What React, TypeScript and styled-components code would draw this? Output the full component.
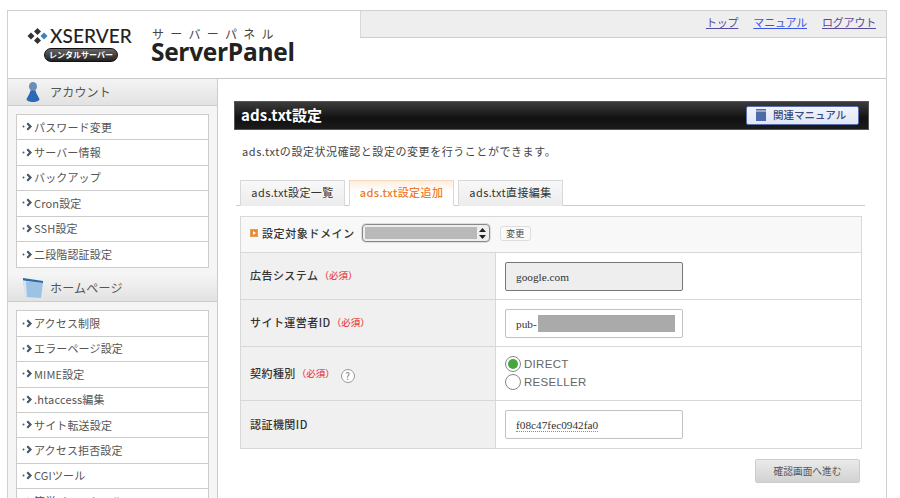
import React from "react";
import styled, { createGlobalStyle } from "styled-components";

const Global = createGlobalStyle`
  html, body { margin: 0; padding: 0; background: #fff; height: 498px; overflow: hidden; }
  body { font-family: "Noto Sans CJK JP", "Noto Sans", "Liberation Sans", sans-serif; color: #333; }
`;
const Page = styled.div`
  width: 880px; height: 488px; margin: 10px 0 0 7px; box-sizing: border-box;
  border: 1px solid #d0d0d0; border-bottom: 0; overflow: hidden; display: flex; flex-direction: column;
`;
const Header = styled.header`
  height: 68px; box-sizing: border-box; flex: none; display: flex; border-bottom: 1px solid #c8c8c8;
`;
const Brand = styled.div`
  width: 352px; flex: none; display: flex; padding: 14px 0 0 19px; box-sizing: border-box; gap: 18px;
`;
const Logo = styled.div`
  width: 106px; display: flex; flex-direction: column; align-items: flex-start;
`;
const LogoTop = styled.div`display: flex; align-items: center; gap: 2px; height: 22px;`;
const LogoWord = styled.span`
  font: 500 19px/22px "Lato", "Noto Sans", sans-serif; color: #222; letter-spacing: .1px;
`;
const LogoPill = styled.span`
  margin: 1px 0 0 17px; width: 74px; height: 14px; border-radius: 7px; border: 1px solid #111; box-sizing: border-box;
  background: linear-gradient(#666, #222); color: #fff; font-size: 8px; line-height: 12px; text-align: center; font-weight: 700;
`;
const Product = styled.div`display: flex; flex-direction: column; margin-top: 3px;`;
const ProductKana = styled.span`font-size: 12px; line-height: 12px; letter-spacing: 6.3px; color: #444; padding-left: 1px;`;
const ProductName = styled.span`font: 700 24.5px/24px "Open Sans", "Noto Sans", sans-serif; color: #222; letter-spacing: -.3px;`;
const TopBar = styled.nav`
  flex: 1; height: 27px; background: #eee; border-left: 1px solid #d8d8d8; border-bottom: 1px solid #ccc;
  display: flex; justify-content: flex-end; align-items: center; gap: 15px; padding: 0 10px 4px 0; box-sizing: border-box;
`;
const TopLink = styled.a<{ $visited?: boolean }>`
  font-size: 11px; line-height: 14px; text-decoration: underline; letter-spacing: -.2px;
  color: ${p => (p.$visited ? "#5a4a9a" : "#3a55e0")};
`;
const Body = styled.div`flex: 1; display: flex; min-height: 0;`;
const Sidebar = styled.aside`
  width: 209px; flex: none; background: #f5f5f5; border-right: 1px solid #ccc; overflow: hidden;
`;
const SideHead = styled.div`
  height: 27px; box-sizing: border-box; display: flex; align-items: center; gap: 5px; padding: 0 0 1px 13px;
  background: linear-gradient(#f4f4f4, #e2e2e2); border-bottom: 1px solid #ccc;
  font-size: 12px; color: #555; letter-spacing: .2px;
`;
const IconSlot = styled.span`width: 24px; flex: none; display: flex; justify-content: center;`;
const SideMenu = styled.ul`
  list-style: none; margin: 8px 8px 7px 8px; padding: 0; background: #fff; border: 1px solid #ccc;
`;
const SideItem = styled.li`
  height: 25.4px; box-sizing: border-box; border-bottom: 1px solid #ccc; display: flex; align-items: center; padding: 0 0 1px 5px;
  font-size: 11px; color: #555; letter-spacing: .15px;
  &:last-child { border-bottom: 0; }
`;
const Main = styled.main`flex: 1; padding: 22px 17px 0 16px; min-width: 0;`;
const TitleBar = styled.div`
  height: 29px; box-sizing: border-box; background: linear-gradient(#3c3c3c, #111 60%, #1b1b1b); border: 1px solid #555;
  display: flex; align-items: center; justify-content: space-between; padding: 0 9px 1px 6px;
`;
const Title = styled.h1`margin: 0; font-size: 15px; line-height: 20px; font-weight: 700; color: #fff; letter-spacing: .1px;`;
const ManualButton = styled.a`
  width: 113px; height: 19px; box-sizing: border-box; background: linear-gradient(#f2f4fb, #e1e6f5); border: 1px solid #5a6fb0; border-radius: 2px;
  display: flex; align-items: center; gap: 7px; padding: 0 0 1px 9px; font-size: 10.5px; font-weight: 500; color: #3a4a7c;
`;
const Intro = styled.p`margin: 13px 0 0 8px; font-size: 11px; line-height: 16px; color: #444; letter-spacing: .56px;`;
const Tabs = styled.div`
  display: flex; gap: 4px; margin: 21px 4px 0 2px; padding-left: 4px; border-bottom: 1px solid #ccc; height: 26px; box-sizing: border-box;
`;
const Tab = styled.div<{ $active?: boolean }>`
  width: 105px; height: 26px; box-sizing: border-box; display: flex; align-items: center; justify-content: center; padding-bottom: 3px;
  font-size: 11px; letter-spacing: .4px; border: 1px solid #d8d8d8; border-bottom: 0;
  color: ${p => (p.$active ? "#f07a2a" : "#333")}; font-weight: ${p => (p.$active ? 500 : 400)};
  background: ${p => (p.$active ? "linear-gradient(#fdeedd, #fff 45%)" : "linear-gradient(#f8f8f8, #ececec)")};
  ${p => p.$active && "border-bottom: 1px solid #fff; border-top-color: #f3d9bf;"}
`;
const Form = styled.div`
  margin: 10px 0 0 6px; border: 1px solid #d8d8d8; width: 622px; box-sizing: border-box;
`;
const DomainRow = styled.div`
  height: 36px; box-sizing: border-box; background: #f8f8f8; border-bottom: 1px solid #d8d8d8; display: flex; align-items: center; padding: 0 0 3px 9px;
`;
const Marker = styled.span`
  width: 8px; height: 8px; background: #f0862e; border: 1px solid #e0a060; box-sizing: border-box; margin-right: 4px; flex: none;
  display: flex; align-items: center; justify-content: center;
  &::after { content: ""; border-left: 3px solid #fff; border-top: 2px solid transparent; border-bottom: 2px solid transparent; }
`;
const DomainLabel = styled.span`font-size: 11px; color: #333; letter-spacing: .6px; font-weight: 500;`;
const DomainSelect = styled.div`
  width: 128px; height: 18px; margin-left: 7px; box-sizing: border-box; border: 1px solid #888; border-radius: 4px; background: #eee;
  display: flex; align-items: center; justify-content: space-between; padding: 2px 3px 2px 2px; box-shadow: 0 0 0 1px #ddd;
`;
const Redaction = styled.span`flex: 1; align-self: stretch; background: #b9b9b9;`;
const Arrows = styled.svg`width: 7px; height: 11px; flex: none; margin-left: 2px;`;
const SmallButton = styled.button`
  width: 31px; height: 15px; padding: 0; margin-left: 10px; background: #fafafa; border: 1px solid #ddd; border-radius: 3px;
  font: 9px/13px "Noto Sans CJK JP", sans-serif; color: #444; letter-spacing: .4px;
`;
const Row = styled.div<{ $h: number; $last?: boolean }>`
  display: flex; height: ${p => p.$h}px; box-sizing: border-box;
  ${p => !p.$last && "border-bottom: 1px solid #d8d8d8;"}
`;
const LabelCell = styled.div`
  width: 255px; flex: none; box-sizing: border-box; background: #f0f0f0; border-right: 1px solid #d8d8d8;
  display: flex; align-items: center; padding: 0 0 2px 9px; font-size: 11px; font-weight: 500; color: #333; letter-spacing: .45px;
`;
const Required = styled.span`color: #e8474a; font-size: 9.5px; margin-left: 1px; font-weight: 500; letter-spacing: 0;`;
const Help = styled.span`
  width: 14px; height: 14px; margin-left: 6px; margin-top: 6px; border: 1px solid #999; border-radius: 50%; box-sizing: border-box;
  font-size: 10px; line-height: 12px; text-align: center; color: #777; font-weight: 400; background: #fff;
`;
const ValueCell = styled.div`
  flex: 1; display: flex; align-items: center; padding-left: 9px; background: #fff;
`;
const Field = styled.div<{ $disabled?: boolean }>`
  width: 178px; height: 29px; box-sizing: border-box; border-radius: 2px; padding: 1px 0 0 10px;
  display: flex; align-items: center; font: 11.3px/14px "Liberation Serif", serif; color: #333;
  border: 1px solid ${p => (p.$disabled ? "#777" : "#c2c2c2")};
  background: ${p => (p.$disabled ? "#eee" : "#fff")};
`;
const FieldRedaction = styled.span`width: 137px; height: 17px; background: #aaa; margin-left: 1px;`;
const Squiggle = styled.span`border-bottom: 1px dotted #e66; line-height: 12px;`;
const Radios = styled.div`display: flex; flex-direction: column; margin-top: -1px;`;
const RadioRow = styled.label`
  display: flex; align-items: center; gap: 3px; height: 17.5px; font-size: 11.5px; color: #666; letter-spacing: .3px;
  font-family: "Liberation Sans", sans-serif;
`;
const RadioDot = styled.span<{ $on?: boolean }>`
  width: 16px; height: 16px; box-sizing: border-box; border-radius: 50%; border: 1px solid #888; background: #fff; flex: none;
  display: flex; align-items: center; justify-content: center;
  &::after { content: ""; width: 10px; height: 10px; border-radius: 50%; background: ${p => (p.$on ? "#44a63c" : "transparent")}; }
`;
const Actions = styled.div`display: flex; justify-content: flex-end; margin: 10px 9px 0 0;`;
const Submit = styled.button`
  width: 105px; height: 24px; padding: 0; border: 1px solid #ccc; border-radius: 2px; background: linear-gradient(#eaeaea, #d2d2d2);
  font: 9.7px/14px "Noto Sans CJK JP", sans-serif; color: #555;
`;
const IconSvg = styled.svg`flex: none; display: block;`;
const Bullet = styled.svg`width: 11px; height: 9px; flex: none; margin-right: 1px;`;

const Diamonds = () => (
  <IconSvg width="21" height="16" viewBox="0 0 21 16">
    <path d="M10.500 0l3.500 3.500-3.500 3.500L7 3.500z" fill="#333" />
    <path d="M4 4.500l3.500 3.500L4 11.500.5 8z" fill="#333" />
    <path d="M17 4.500l3.500 3.500-3.500 3.500L13.500 8z" fill="#3f7fc0" />
    <path d="M10.500 9l3.500 3.500-3.500 3.500L7 12.500z" fill="#333" />
  </IconSvg>
);
const PersonIcon = () => (
  <IconSvg width="14" height="21" viewBox="0 0 14 21">
    <ellipse cx="7" cy="5.500" rx="4" ry="4.500" fill="#6d8db5" />
    <path d="M4.500 9.500h5l1 3 3 5.500c0 2-3 3-6.500 3S.5 20 .5 18l3-5.500z" fill="#2a68b8" />
  </IconSvg>
);
const WindowIcon = () => (
  <IconSvg width="22" height="20" viewBox="0 0 22 20">
    <path d="M1 3l20 2-2 15-15-1z" fill="#9cc2e4" />
    <path d="M1 0l20 3v2L1 2.500z" fill="#2a6aa8" />
    <path d="M1 2.500l3 .5 1 16-2-1z" fill="#d4e4f2" />
  </IconSvg>
);
const BookIcon = () => (
  <IconSvg width="10" height="12" viewBox="0 0 10 12">
    <rect width="10" height="12" fill="#4f6aa8" />
    <rect y="1.500" width="10" height="1" fill="#dfe5f4" />
  </IconSvg>
);
const ItemBullet = () => (
  <Bullet viewBox="0 0 11 9">
    <circle cx="1.500" cy="4.500" r="1" fill="#555" />
    <path d="M6 .5l4 4-4 4-1.500-1.500 2.500-2.500-2.500-2.500z" fill="#456" />
  </Bullet>
);

const account = ["パスワード変更", "サーバー情報", "バックアップ", "Cron設定", "SSH設定", "二段階認証設定"];
const homepage = ["アクセス制限", "エラーページ設定", "MIME設定", ".htaccess編集", "サイト転送設定", "アクセス拒否設定", "CGIツール", "簡単インストール"];

export default function App() {
  return (
    <>
      <Global />
      <Page>
        <Header>
          <Brand>
            <Logo>
              <LogoTop><Diamonds /><LogoWord>XSERVER</LogoWord></LogoTop>
              <LogoPill>レンタルサーバー</LogoPill>
            </Logo>
            <Product>
              <ProductKana>サーバーパネル</ProductKana>
              <ProductName>ServerPanel</ProductName>
            </Product>
          </Brand>
          <TopBar>
            <TopLink $visited>トップ</TopLink>
            <TopLink>マニュアル</TopLink>
            <TopLink $visited>ログアウト</TopLink>
          </TopBar>
        </Header>
        <Body>
          <Sidebar>
            <SideHead><IconSlot><PersonIcon /></IconSlot>アカウント</SideHead>
            <SideMenu>
              {account.map(t => <SideItem key={t}><ItemBullet />{t}</SideItem>)}
            </SideMenu>
            <SideHead><IconSlot><WindowIcon /></IconSlot>ホームページ</SideHead>
            <SideMenu>
              {homepage.map(t => <SideItem key={t}><ItemBullet />{t}</SideItem>)}
            </SideMenu>
          </Sidebar>
          <Main>
            <TitleBar>
              <Title>ads.txt設定</Title>
              <ManualButton><BookIcon />関連マニュアル</ManualButton>
            </TitleBar>
            <Intro>ads.txtの設定状況確認と設定の変更を行うことができます。</Intro>
            <Tabs>
              <Tab>ads.txt設定一覧</Tab>
              <Tab $active>ads.txt設定追加</Tab>
              <Tab>ads.txt直接編集</Tab>
            </Tabs>
            <Form>
              <DomainRow>
                <Marker />
                <DomainLabel>設定対象ドメイン</DomainLabel>
                <DomainSelect>
                  <Redaction />
                  <Arrows viewBox="0 0 7 11"><path d="M3.500 0L7 4H0zM3.500 11L0 7h7z" fill="#222" /></Arrows>
                </DomainSelect>
                <SmallButton>変更</SmallButton>
              </DomainRow>
              <Row $h={47}>
                <LabelCell>広告システム<Required>（必須）</Required></LabelCell>
                <ValueCell><Field $disabled>google.com</Field></ValueCell>
              </Row>
              <Row $h={47}>
                <LabelCell>サイト運営者ID<Required>（必須）</Required></LabelCell>
                <ValueCell><Field>pub-<FieldRedaction /></Field></ValueCell>
              </Row>
              <Row $h={54}>
                <LabelCell>契約種別<Required>（必須）</Required><Help>?</Help></LabelCell>
                <ValueCell>
                  <Radios>
                    <RadioRow><RadioDot $on />DIRECT</RadioRow>
                    <RadioRow><RadioDot />RESELLER</RadioRow>
                  </Radios>
                </ValueCell>
              </Row>
              <Row $h={47} $last>
                <LabelCell>認証機関ID</LabelCell>
                <ValueCell><Field><Squiggle>f08c47fec0942fa0</Squiggle></Field></ValueCell>
              </Row>
            </Form>
            <Actions><Submit>確認画面へ進む</Submit></Actions>
          </Main>
        </Body>
      </Page>
    </>
  );
}
